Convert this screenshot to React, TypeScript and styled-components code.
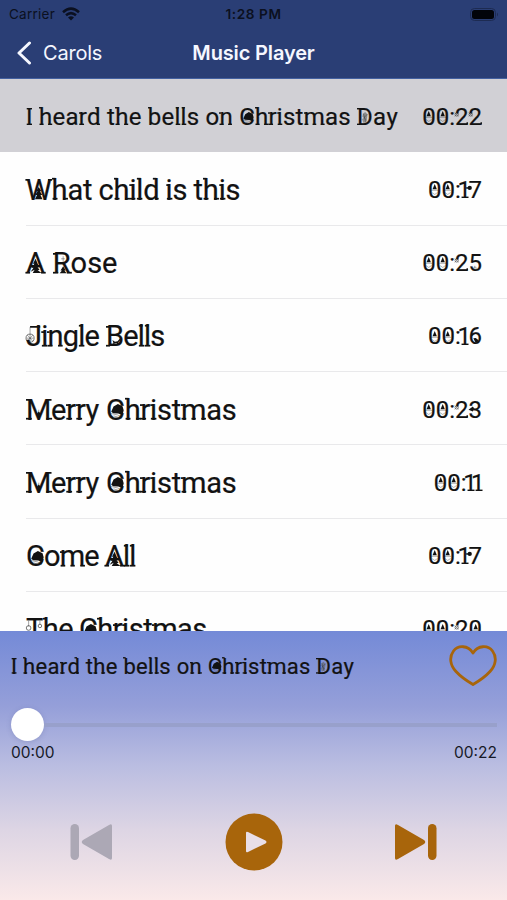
import React from "react";
import styled, { createGlobalStyle } from "styled-components";

const GlobalStyle = createGlobalStyle`
  * { box-sizing: border-box; }
  body { margin: 0; background: #fefefe; }
`;

const Screen = styled.main`
  width: 507px;
  height: 900px;
  display: flex;
  flex-direction: column;
  overflow: hidden;
  background: #fefefe;
  color: #111;
  font-family: Inter, "Liberation Sans", sans-serif;
`;

const Header = styled.header`
  flex: 0 0 79px;
  background: #2a3e75;
  border-bottom: 1px solid #4360a0;
`;

const StatusBar = styled.div`
  height: 27px;
  display: grid;
  grid-template-columns: 1fr auto 1fr;
  align-items: center;
  padding: 1px 9px 0 9px;
  font-size: 13.5px;
  color: #0b1020;
`;

const Carrier = styled.div`
  display: flex;
  align-items: center;
  gap: 7px;
  letter-spacing: 0.25px;
`;

const Clock = styled.div`
  font-size: 13.6px;
  font-weight: 600;
  letter-spacing: 0.6px;
`;

const Battery = styled.svg`
  justify-self: end;
`;

const NavBar = styled.nav`
  height: 51px;
  display: grid;
  grid-template-columns: 1fr auto 1fr;
  align-items: center;
  padding: 0 16px;
  color: #f5f7ff;
`;

const BackButton = styled.button`
  display: flex;
  align-items: center;
  gap: 11px;
  padding: 0;
  border: 0;
  background: none;
  color: inherit;
  font: 400 20px Inter, sans-serif;
  letter-spacing: -0.2px;
`;

const NavTitle = styled.h1`
  margin: 0;
  font-size: 20px;
  font-weight: 600;
  letter-spacing: -0.15px;
`;

const TrackList = styled.ul`
  flex: 1 1 0;
  min-height: 0;
  overflow: hidden;
  margin: 0;
  padding: 0;
  list-style: none;
`;

const Row = styled.li<{ $selected?: boolean }>`
  height: 73.25px;
  padding-left: 26px;
  background: ${(p) => (p.$selected ? "#d1d0d5" : "transparent")};
`;

const RowBody = styled.div<{ $line: boolean }>`
  height: 100%;
  display: flex;
  align-items: center;
  justify-content: space-between;
  padding: 4px 25px 0 0;
  border-bottom: 1px solid ${(p) => (p.$line ? "#e9e9eb" : "transparent")};
`;

const Festive = styled.span<{ $size: number; $track: number; $word?: number }>`
  font-family: Roboto, sans-serif;
  font-size: ${(p) => p.$size}px;
  line-height: 1.2;
  letter-spacing: ${(p) => p.$track}px;
  word-spacing: ${(p) => p.$word || 0}px;
  font-kerning: none;
  white-space: nowrap;
  color: #121212;
  -webkit-text-stroke: 0.2px currentColor;
`;

const Letter = styled.span<{ $narrow: boolean }>`
  position: relative;
  margin: ${(p) => (p.$narrow ? "0 -0.1em 0 -0.14em" : "0")};
`;

const Ornament = styled.svg`
  position: absolute;
  left: 0;
  bottom: 0.215em;
  width: 0.7em;
  height: 0.74em;
  overflow: visible;
  pointer-events: none;
`;

const bar = (x: number, y: number, w: number) => <path d={`M${x} ${y}h${w}`} />;

/* Decorations are drawn in hundredths of an em, with the baseline at y=71. */
const marks: Record<string, React.ReactNode> = {
  I: <>{bar(3, 3, 22)}{bar(3, 68, 22)}</>,
  l: <>{bar(3, -1, 13)}{bar(3, 68, 19)}</>,
  i: <>{bar(1, 21, 12)}{bar(3, 68, 19)}</>,
  h: <>{bar(0, -1, 12)}{bar(2, 68, 17)}{bar(38, 68, 17)}</>,
  d: <>{bar(34, -1, 12)}{bar(42, 68, 12)}</>,
  b: bar(0, -1, 12),
  r: <>{bar(0, 21, 10)}{bar(1, 68, 20)}</>,
  n: <>{bar(0, 21, 9)}{bar(2, 68, 17)}{bar(38, 68, 16)}</>,
  m: <>{bar(0, 21, 9)}{bar(2, 68, 16)}{bar(36, 68, 15)}{bar(70, 68, 16)}</>,
  W: <><path className="solid" d="M44 28l-9 14h5l-8 13h6l-7 15h26l-7-15h6l-8-13h5z" />{bar(-2, 3, 14)}{bar(76, 3, 14)}</>,
  A: <><path className="solid" d="M33 20l-9 17h5l-9 14h6L16 65l14-7-7 11h30L40 59h7l-8-12h6z" />{bar(-2, 68, 16)}{bar(52, 68, 16)}</>,
  C: <><path className="solid" d="M18 44l8-18 15-9 16 8 4 14-4 16-15-5-17-1z" /><path className="hair" d="M18 50l22 5 14 7M26 58l16 5" /></>,
  D: <><path className="grey" d="M24 25l10-8 10 10-5 31-13 3-4-13 9-6-6-8z" /><path className="hair" d="M21 32l19 19M22 48l22-23M27 24l9 33" />{bar(0, 3, 14)}{bar(0, 68, 14)}</>,
  R: <><path className="solid" d="M35 46l-9 14h5l-8 10h24l-8-10h5z" /><path className="hair" d="M28 20h13M35 11v18" />{bar(0, 3, 14)}{bar(0, 68, 18)}{bar(48, 68, 17)}</>,
  J: <><circle className="ball" cx="14" cy="42" r="14" /><path className="hair" d="M14 4v52M2 42h24M5 32l18 20M23 32L5 52" />{bar(14, 3, 35)}</>,
  B: <><path className="solid" d="M22 48l9 6 9-1 7-9 2 5-6 7-2 9-5-6-7 1-4 6v-10z" />{bar(0, 3, 14)}{bar(0, 68, 14)}</>,
  M: <><path className="hair" d="M44 37v35" /><path className="solid" d="M44 43l7 9-7 9-7-9z" />{bar(0, 3, 14)}{bar(74, 3, 14)}{bar(0, 68, 20)}{bar(70, 68, 20)}</>,
  T: <><path className="hair" d="M9 6v20M48 6v13" /><circle className="ball" cx="9" cy="31" r="8" /><circle className="ball" cx="48" cy="24" r="6" />{bar(22, 68, 18)}</>,
  "0": <><path className="solid" d="M28 13l-9 21h18z" /><path className="hair" d="M14 39h28M16 48l12 8 12-8" /></>,
  "2": <><circle className="ball" cx="7" cy="27" r="7" /><path className="hair" d="M-2 19l18 16M-2 35l18-16" /><path d="M51 59v10" /></>,
  "1": <>{bar(19, 68, 29)}</>,
  "7": <><circle className="solid" cx="3" cy="29" r="9" /><path d="M-12 29h18" /></>,
  "6": <path className="solid" d="M18 43l10-1 12 9-4 7-9 2z" />,
  "5": <path className="hair" d="M16 59h18M20 55h10M24 49v8" />,
  "3": <path className="solid" d="M-2 36l18-13 5 7-5 14z" />,
};

const MarkGroup = styled.g`
  fill: none;
  stroke: currentColor;
  stroke-width: 6;
  .solid { fill: currentColor; stroke: none; }
  .hair { stroke-width: 2; opacity: 0.65; }
  .grey { fill: #666; stroke: none; opacity: 0.65; }
  .ball { stroke-width: 3; opacity: 0.65; }
`;

function FestiveText({ text, size, track, word }: { text: string; size: number; track: number; word?: number }) {
  return (
    <Festive $size={size} $track={track} $word={word}>
      {[...text].map((ch, i) =>
        marks[ch] ? (
          <Letter key={i} $narrow={ch === "1"}>
            {ch}
            <Ornament viewBox="0 0 70 74" aria-hidden="true">
              <MarkGroup>{marks[ch]}</MarkGroup>
            </Ornament>
          </Letter>
        ) : ch,
      )}
    </Festive>
  );
}

const Player = styled.section`
  flex: 0 0 269px;
  display: flex;
  flex-direction: column;
  padding: 10px 10px 0 11px;
  background: linear-gradient(#748ad7 0%, #959fd9 28%, #babde1 50%, #ddd5e4 74%, #fae9e9 100%);
`;

const NowPlaying = styled.div`
  height: 50px;
  display: flex;
  justify-content: space-between;
  align-items: center;
`;

const SongTitle = styled.div`
  padding-top: 3px;
`;

const Slider = styled.div`
  height: 34px;
  margin-top: 16px;
  display: flex;
  align-items: center;
`;

const Thumb = styled.div`
  width: 33px;
  height: 33px;
  flex: none;
  border-radius: 50%;
  background: #fff;
  box-shadow: 0 1px 5px #4f5b9440;
`;

const Rail = styled.div`
  flex: 1;
  height: 4px;
  margin-top: 2px;
  background: #98a0cb;
`;

const Times = styled.div`
  display: flex;
  justify-content: space-between;
  margin-top: 2px;
  font-size: 15.5px;
  line-height: 20px;
  color: #161927;
`;

const Controls = styled.div`
  display: flex;
  justify-content: space-between;
  align-items: center;
  height: 60px;
  margin-top: 49px;
  padding: 0 60px 0 59px;
`;

const ControlButton = styled.button<{ $muted?: boolean }>`
  display: flex;
  padding: 0;
  border: 0;
  background: none;
  color: ${(p) => (p.$muted ? "#aca8b5" : "#a8650b")};
`;

const tracks = [
  { title: "I heard the bells on Christmas Day", time: "00:22", size: 24, track: 0.24, word: 0 },
  { title: "What child is this", time: "00:17", size: 29, track: -0.15, word: -0.9 },
  { title: "A Rose", time: "00:25", size: 29, track: 0, word: 0.6 },
  { title: "Jingle Bells", time: "00:16", size: 29, track: -0.8, word: 0.5 },
  { title: "Merry Christmas", time: "00:23", size: 29, track: -0.22, word: 0 },
  { title: "Merry Christmas", time: "00:11", size: 29, track: -0.22, word: 0 },
  { title: "Come All", time: "00:17", size: 29, track: -0.9, word: 0 },
  { title: "The Christmas", time: "00:20", size: 29, track: -0.5, word: -1 },
];

function SkipIcon() {
  return (
    <svg width="43" height="38" viewBox="0 0 43 38" fill="currentColor">
      <path d="M1 3Q1 0 4 2L30 17Q32.500 19 30 21L4 36Q1 38 1 35Z" />
      <rect x="34" y="1" width="8.500" height="36" rx="4.200" />
    </svg>
  );
}

const Mirror = styled.span`
  display: flex;
  transform: scaleX(-1);
`;

export default function App() {
  return (
    <>
      <GlobalStyle />
      <Screen>
        <Header>
          <StatusBar>
            <Carrier>
              Carrier
              <svg width="18" height="14" viewBox="0 0 18 14" fill="none" stroke="currentColor" strokeWidth="2.500">
                <path d="M1 5.200Q9-2 17 5.200M4 8.300Q9 4 14 8.300" />
                <path d="M6 10.500Q9 8 12 10.500L9 13.500Z" fill="currentColor" stroke="none" />
              </svg>
            </Carrier>
            <Clock>1:28 PM</Clock>
            <Battery width="28" height="13" viewBox="0 0 28 13">
              <rect x=".5" y=".5" width="25" height="12" rx="4" fill="none" stroke="#1d2b52" />
              <rect x="2" y="2" width="22" height="9" rx="2.500" fill="#02040a" />
              <path d="M27 4.500q2 2 0 4z" fill="#1d2b52" />
            </Battery>
          </StatusBar>
          <NavBar>
            <BackButton>
              <svg width="16" height="24" viewBox="0 0 16 24" fill="none" stroke="currentColor" strokeWidth="3" strokeLinecap="round" strokeLinejoin="round">
                <path d="M13.500 2L3 12l10.500 10" />
              </svg>
              Carols
            </BackButton>
            <NavTitle>Music Player</NavTitle>
          </NavBar>
        </Header>
        <TrackList>
          {tracks.map((t, i) => (
            <Row key={i} $selected={i === 0}>
              <RowBody $line={i > 0}>
                <FestiveText text={t.title} size={t.size} track={t.track} word={t.word} />
                <FestiveText text={t.time} size={24} track={0} />
              </RowBody>
            </Row>
          ))}
        </TrackList>
        <Player>
          <NowPlaying>
            <SongTitle>
              <FestiveText text="I heard the bells on Christmas Day" size={22} track={0.28} />
            </SongTitle>
            <ControlButton aria-label="Favourite">
              <svg width="48" height="42" viewBox="0 0 48 42" fill="none" stroke="currentColor" strokeWidth="2.800" strokeLinejoin="round">
                <path d="M24 8C19 0 9 0 4.500 6C0 12 1 20 7 26.500C12 32 18 36 24 39.500C30 36 36 32 41 26.500C47 20 48 12 43.500 6C39 0 29 0 24 8Z" />
              </svg>
            </ControlButton>
          </NowPlaying>
          <Slider>
            <Thumb />
            <Rail />
          </Slider>
          <Times>
            <span>00:00</span>
            <span>00:22</span>
          </Times>
          <Controls>
            <ControlButton $muted aria-label="Previous">
              <Mirror><SkipIcon /></Mirror>
            </ControlButton>
            <ControlButton aria-label="Play">
              <svg width="58" height="58" viewBox="0 0 58 58">
                <circle cx="29" cy="29" r="28.500" fill="currentColor" />
                <path d="M21 20Q21 18 23 19L40.500 27.500Q42.500 29 40.500 30.500L23 39Q21 40 21 38Z" fill="#e9dfe8" />
              </svg>
            </ControlButton>
            <ControlButton aria-label="Next">
              <SkipIcon />
            </ControlButton>
          </Controls>
        </Player>
      </Screen>
    </>
  );
}
